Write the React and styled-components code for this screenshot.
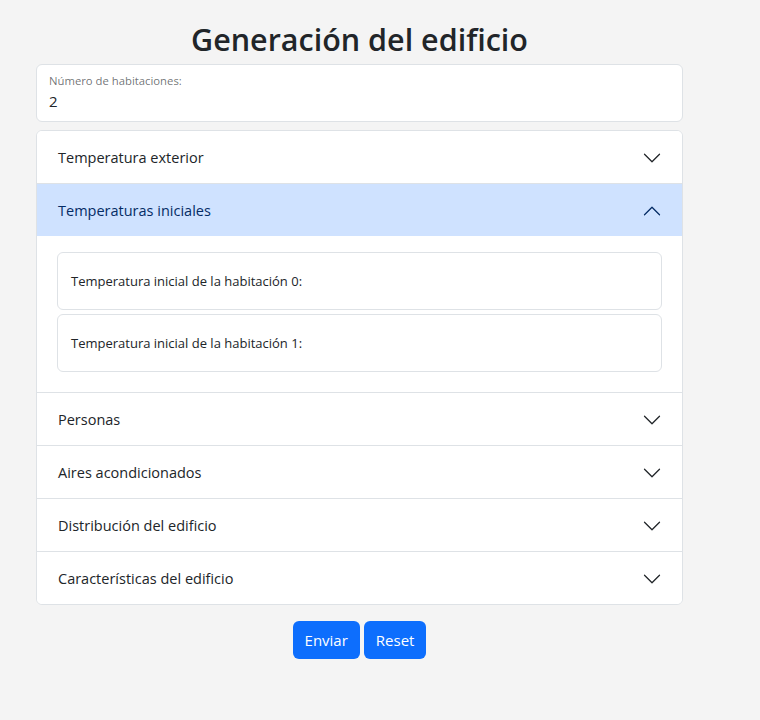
import React from "react";
import styled, {createGlobalStyle} from "styled-components";

const GlobalStyle = createGlobalStyle`
  body {
    margin: 0;
    background: #f4f4f4;
    font-family: "Open Sans", "Noto Sans", sans-serif;
    color: #212529;
  }
`;

const Page = styled.div`
  width: 647px;
  margin-left: 36px;
  padding-top: 18px;
  padding-bottom: 62px;
`;

const Title = styled.h1`
  margin: 0 0 4px;
  text-align: center;
  font-size: 30.5px;
  line-height: 42px;
  font-weight: 600;
  color: #212529;
`;

const FloatingField = styled.div`
  box-sizing: border-box;
  height: ${props => props.height || 58}px;
  background: #ffffff;
  border: 1px solid #dee2e6;
  border-radius: 6px;
  padding: ${props => props.padding || '8px 12px'};
  display: flex;
  flex-direction: column;
  justify-content: ${props => props.center ? 'center' : 'flex-start'};
  & + & {
    margin-top: 4px;
  }
`;

const FieldLabel = styled.label`
  font-size: ${props => props.size || 11.3}px;
  line-height: 1.4;
  color: ${props => props.muted ? 'rgba(33,37,41,0.65)' : '#212529'};
`;

const FieldValue = styled.div`
  font-size: 15px;
  line-height: 22px;
  margin-top: 1px;
`;

const Accordion = styled.div`
  margin-top: 8px;
  background: #ffffff;
  border: 1px solid #dee2e6;
  border-radius: 6px;
  overflow: hidden;
`;

const Item = styled.div`
  & + & {
    border-top: 1px solid #dee2e6;
  }
`;

const Header = styled.button`
  box-sizing: border-box;
  width: 100%;
  height: 52px;
  display: flex;
  align-items: center;
  justify-content: space-between;
  padding: 1px 20px 0 21px;
  border: 0;
  margin: 0;
  background: ${props => props.open ? '#cfe2ff' : '#ffffff'};
  color: ${props => props.open ? '#052c65' : '#212529'};
  font-family: inherit;
  font-size: 14.5px;
  text-align: left;
  cursor: pointer;
`;

const Chevron = styled.svg`
  width: 20px;
  height: 20px;
  flex-shrink: 0;
  transform: ${props => props.open ? 'rotate(180deg)' : 'none'};
`;

const Body = styled.div`
  padding: 16px 20px 20px;
`;

const Actions = styled.div`
  display: flex;
  justify-content: center;
  gap: 4px;
  margin-top: 16px;
`;

const Button = styled.button`
  height: 38px;
  padding: 0 12px;
  border: 0;
  border-radius: 6px;
  background: #0d6efd;
  color: #ffffff;
  font-family: inherit;
  font-size: 15px;
  cursor: pointer;
`;

const sections = [
    "Temperatura exterior",
    "Temperaturas iniciales",
    "Personas",
    "Aires acondicionados",
    "Distribución del edificio",
    "Características del edificio",
];

const rooms = 2;

const App = () => {
    const openIndex = 1;
    return (
        <Page>
            <GlobalStyle/>
            <Title>Generación del edificio</Title>
            <FloatingField>
                <FieldLabel muted>Número de habitaciones:</FieldLabel>
                <FieldValue>2</FieldValue>
            </FloatingField>
            <Accordion>
                {
                    sections.map((name, i) => (
                        <Item key={name}>
                            <Header open={i === openIndex}>
                                {name}
                                <Chevron open={i === openIndex} viewBox="0 0 16 16" fill="none"
                                         stroke={i === openIndex ? '#052c65' : '#212529'}
                                         strokeLinecap="round" strokeLinejoin="round">
                                    <path d="M2 5L8 11L14 5"/>
                                </Chevron>
                            </Header>
                            {
                                i === openIndex && (
                                    <Body>
                                        {
                                            Array.from({length: rooms}).map((_, r) => (
                                                <FloatingField key={r} center padding="0 13px">
                                                    <FieldLabel size={13}>
                                                        Temperatura inicial de la habitación {r}:
                                                    </FieldLabel>
                                                </FloatingField>
                                            ))
                                        }
                                    </Body>
                                )
                            }
                        </Item>
                    ))
                }
            </Accordion>
            <Actions>
                <Button>Enviar</Button>
                <Button>Reset</Button>
            </Actions>
        </Page>
    );
};

export default App;
